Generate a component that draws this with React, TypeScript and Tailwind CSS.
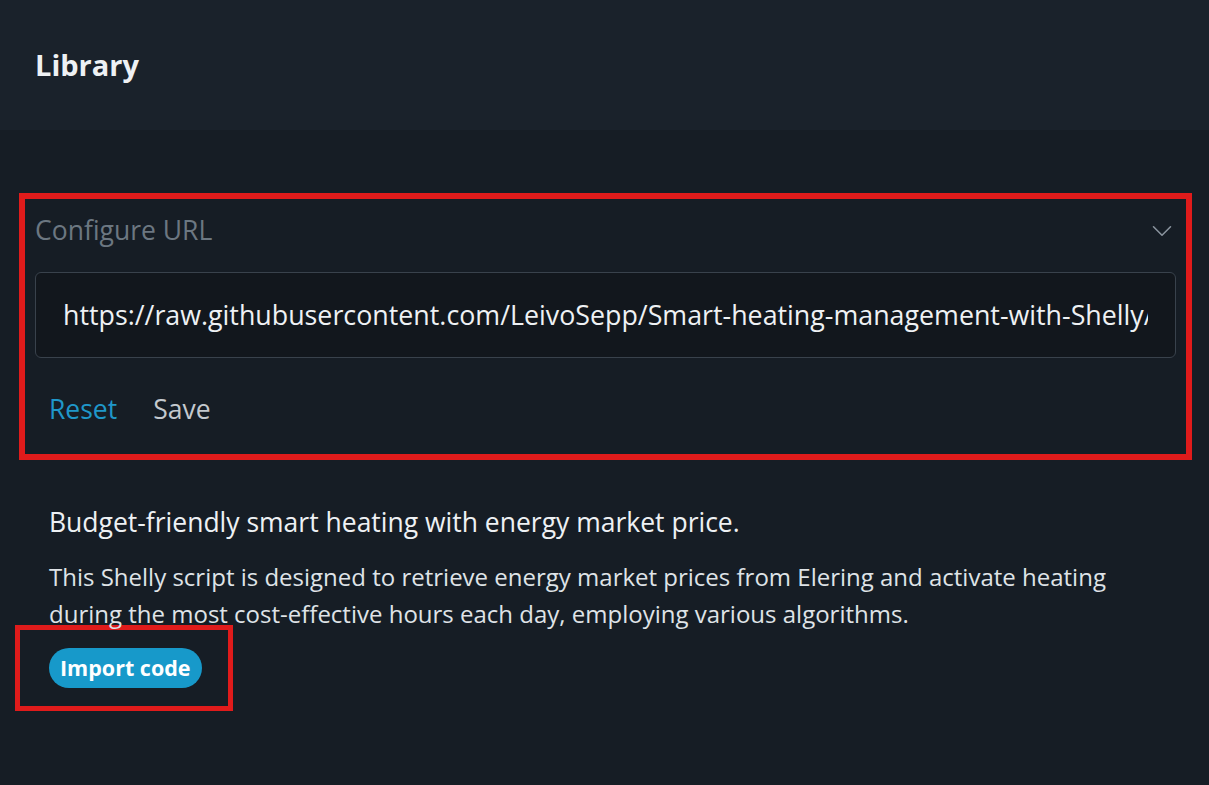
import { ChevronDown } from 'lucide-react';

export default function App() {
    return (
        <div className="w-full h-[785px] bg-[#161d25] text-[#e6e9ec] overflow-hidden" style={{ fontFamily: '"Open Sans", "Noto Sans", sans-serif' }}>
            {/* Header */}
            <div className="h-[130px] bg-[#1a222b] flex items-center px-[35px]">
                <h1 className="text-[29px] font-bold text-[#eef1f4]">Library</h1>
            </div>

            <div className="px-[19px] pt-[63px]">
                {/* Configure URL card */}
                <div className="w-[1173px] border-[6px] border-[#e01b1b] px-[10px] pt-[13px] pb-[24px]">
                    <div className="flex items-center justify-between h-[38px]">
                        <span className="text-[26.5px] text-[#6c7781]">Configure URL</span>
                        <ChevronDown className="w-[34px] h-[34px] text-[#8a949e] -mr-[3px]" strokeWidth={1.1} />
                    </div>
                    <div className="mt-[22px] h-[86px] rounded-[6px] border border-[#39424c] bg-[#12171d] flex items-center pl-[27px] pr-[27px]">
                        <div className="overflow-hidden w-full">
                            <span className="text-[26.8px] text-[#eef1f4] whitespace-nowrap">https://raw.githubusercontent.com/LeivoSepp/Smart-heating-management-with-Shelly/master/</span>
                        </div>
                    </div>
                    <div className="flex items-center gap-[36px] pl-[14px] mt-[32px] h-[40px]">
                        <span className="text-[26.5px] text-[#1f97c9]">Reset</span>
                        <span className="text-[26.5px] text-[#c4c9ce]">Save</span>
                    </div>
                </div>

                {/* Script info */}
                <div className="pl-[30px] pt-[46px]">
                    <h2 className="text-[26.5px] text-[#eef1f4] leading-[32px]">Budget-friendly smart heating with energy market price.</h2>
                    <p className="mt-[20px] text-[24px] text-[#dfe3e7] leading-[37px] max-w-[1100px]">
                        This Shelly script is designed to retrieve energy market prices from Elering and activate heating during the most cost-effective hours each day, employing various algorithms.
                    </p>
                </div>

                <div className="-mt-[7px] -ml-[4px] w-[218px] h-[86px] border-[5px] border-[#e01b1b] flex items-center pl-[29px]">
                    <button className="h-[40px] px-[11px] rounded-full bg-[#1799ca] text-white text-[21.5px] font-bold">Import code</button>
                </div>
            </div>
        </div>
    );
}
